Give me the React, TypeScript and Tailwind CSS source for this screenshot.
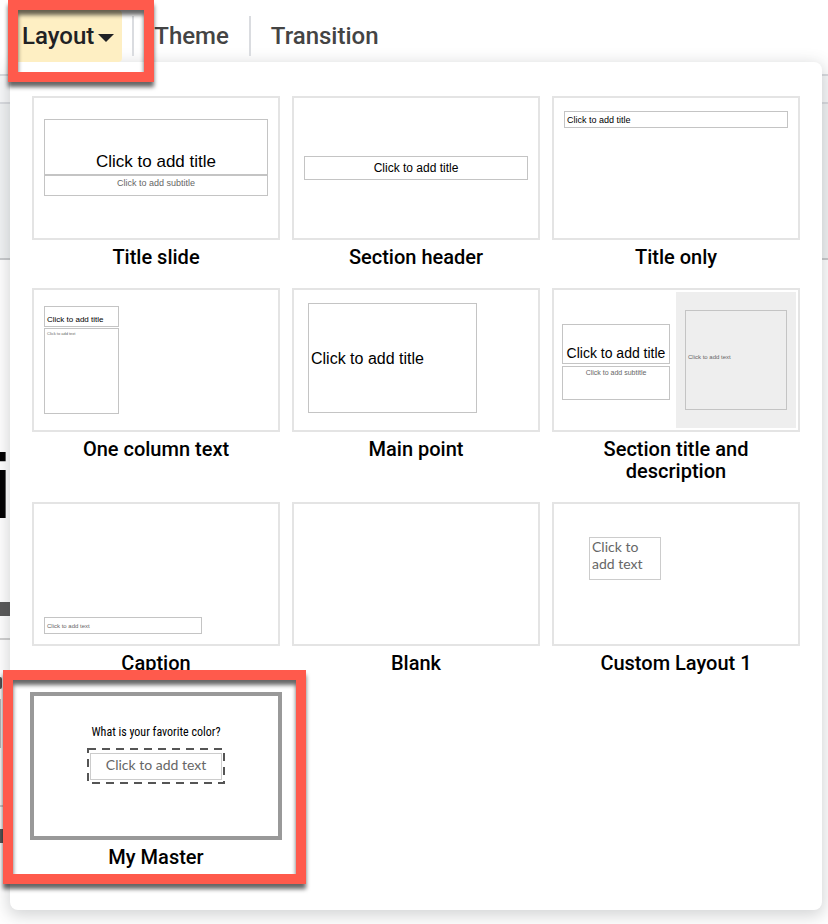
import type { ReactNode } from "react";
import clsx from "clsx";

const arial = "font-['Liberation_Sans',Arial,sans-serif]";

function Highlight({ className }: { className: string }) {
  return (
    <span
      aria-hidden="true"
      className={clsx(
        "pointer-events-none absolute z-30 border-10 border-[#ff5a4c] drop-shadow-[0_5px_2px_rgba(0,0,0,0.6)]",
        className,
      )}
    />
  );
}

function Placeholder({ className, children }: { className?: string; children: ReactNode }) {
  return (
    <span className={clsx("flex border border-[#c4c4c4] px-0.5 text-left whitespace-nowrap", arial, className)}>
      {children}
    </span>
  );
}

type Layout = { name: string; preview: ReactNode; selected?: boolean };

const layouts: Layout[] = [
  {
    name: "Title slide",
    preview: (
      <span className="flex flex-col px-[10px] pt-[21px]">
        <Placeholder className="h-14 items-end justify-center border-[#b4b4b4] pb-0.5 text-[17px] leading-5 text-black">
          Click to add title
        </Placeholder>
        <Placeholder className="h-[21px] items-start justify-center pt-px text-[9px] leading-3 text-[#666]">
          Click to add subtitle
        </Placeholder>
      </span>
    ),
  },
  {
    name: "Section header",
    preview: (
      <span className="flex h-full flex-col justify-center px-[10px]">
        <Placeholder className="h-6 items-center justify-center text-[12px] leading-4 text-black">
          Click to add title
        </Placeholder>
      </span>
    ),
  },
  {
    name: "Title only",
    preview: (
      <span className="flex flex-col px-[10px] pt-[13px]">
        <Placeholder className="h-[17px] items-center text-[9px] leading-3 text-black">Click to add title</Placeholder>
      </span>
    ),
  },
  {
    name: "One column text",
    preview: (
      <span className="flex w-[85px] flex-col gap-px pt-4 pl-[10px]">
        <Placeholder className="h-[21px] items-end border-[#b4b4b4] pb-px text-[8px] leading-[10px] text-black">
          Click to add title
        </Placeholder>
        <Placeholder className="h-[86px] items-start pt-0.5 text-[4px] leading-[6px] text-[#666]">
          Click to add text
        </Placeholder>
      </span>
    ),
  },
  {
    name: "Main point",
    preview: (
      <span className="flex pt-[13px] pl-[14px]">
        <Placeholder className="h-[110px] w-[169px] items-center pt-0.5 text-[16px] leading-5 text-black">
          Click to add title
        </Placeholder>
      </span>
    ),
  },
  {
    name: "Section title and description",
    preview: (
      <span className="grid h-full grid-cols-2 p-0.5">
        <span className="flex flex-col gap-0.5 px-1.5 pt-8">
          <Placeholder className="h-10 items-end justify-center border-[#b4b4b4] text-[14px] leading-5 text-black">
            Click to add title
          </Placeholder>
          <Placeholder className="h-[34px] items-start justify-center pt-0.5 text-[7px] leading-2 text-[#666]">
            Click to add subtitle
          </Placeholder>
        </span>
        <span className="flex flex-col bg-[#eee] px-[9px] py-[18px]">
          <Placeholder className="flex-1 items-center pb-1.5 text-[6px] leading-2 text-[#666]">
            Click to add text
          </Placeholder>
        </span>
      </span>
    ),
  },
  {
    name: "Caption",
    preview: (
      <span className="flex h-full items-end pb-[10px] pl-[10px]">
        <Placeholder className="h-[17px] w-[158px] items-center text-[6px] leading-2 text-[#666]">
          Click to add text
        </Placeholder>
      </span>
    ),
  },
  { name: "Blank", preview: null },
  {
    name: "Custom Layout 1",
    preview: (
      <span className="flex pt-[33px] pl-[35px]">
        <span className="h-[43px] w-[72px] border border-[#ccc] px-0.5 text-left font-['Lato',sans-serif] text-[14px] leading-[17px] text-[#666]">
          Click to
          <br />
          add text
        </span>
      </span>
    ),
  },
  {
    name: "My Master",
    selected: true,
    preview: (
      <span className="flex flex-col items-center gap-1.5 pt-[26px]">
        <span className="font-['Liberation_Sans_Narrow','Roboto_Condensed',Roboto,sans-serif] text-[12px] leading-5 whitespace-nowrap text-black">
          What is your favorite color?
        </span>
        <span className="relative flex h-9 w-[138px] items-center justify-center">
          <svg className="absolute inset-0" width="138" height="36" viewBox="0 0 138 36" fill="none" aria-hidden="true">
            <path d="M1 1H137V35H1Z" stroke="#555" strokeWidth="2" strokeDasharray="8 6" />
          </svg>
          <span className="flex h-[27px] w-[132px] items-center justify-center border border-[#ccc] pb-0.5 font-['Lato',sans-serif] text-[14px] leading-5 text-[#666]">
            Click to add text
          </span>
        </span>
      </span>
    ),
  },
];

function LayoutOption({ name, preview, selected }: Layout) {
  return (
    <li className="relative">
      <button type="button" aria-pressed={!!selected} className={clsx("flex w-full flex-col", selected ? "gap-2" : "gap-1.5")}>
        <span
          className={clsx(
            "block h-36 w-full overflow-hidden border-2 bg-white",
            selected ? "border-[#999] ring-2 ring-[#999]" : "border-[#e4e4e4]",
          )}
        >
          {preview}
        </span>
        <span className="w-full px-8 text-center text-[20px] leading-[22px] font-medium text-black">{name}</span>
      </button>
      {selected && <Highlight className="-top-6 -right-[26px] -bottom-4 -left-[29px]" />}
    </li>
  );
}

function Backdrop() {
  return (
    <div aria-hidden="true" className="absolute inset-0 flex flex-col overflow-hidden">
      <div className="h-[74px]" />
      <div className="h-[30px] border-y-2 border-[#dadce0] bg-[#f8f9fa]" />
      <div className="h-[154px] bg-[#f1f3f4]" />
      <div className="flex-1 border-t-2 border-[#c8cacc] bg-white">
        <div className="h-[342px] pt-[177px]">
          <div className={clsx("flex w-3 justify-end text-[90px] leading-[100px] font-bold text-black", arial)}>i</div>
        </div>
        <div className="h-[14px] w-3 bg-[#595959]" />
        <div className="mt-[22px] h-0.5 w-3 bg-[#d0d0d0]" />
        <div className="mt-[37px] h-3 w-0.5 rounded-r-full bg-[#555]" />
        <div className="mt-[10px] h-[49px] w-px bg-[#bbb]" />
        <div className="mt-[57px] h-0.5 w-3 bg-[#d0d0d0]" />
        <div className="mt-[22px] h-[14px] w-3 bg-[#595959]" />
      </div>
    </div>
  );
}

export default function App() {
  return (
    <div className="relative min-h-screen overflow-hidden bg-white pb-3 font-[Roboto,sans-serif]">
      <Backdrop />
      <header className="relative z-20 flex h-[62px] items-end pl-3 text-[24px] leading-7 font-medium text-[#444]">
        <div className="relative">
          <button
            type="button"
            aria-expanded="true"
            className="flex h-[52px] items-center gap-1 rounded bg-[#feefc3] pr-2 pl-[10px] text-[#202124]"
          >
            Layout
            <svg width="16" height="8" viewBox="0 0 16 8" className="mt-1" fill="currentColor" aria-hidden="true">
              <path d="M0 0H16L8 8Z" />
            </svg>
          </button>
          <Highlight className="-top-[10px] -right-8 -bottom-5 -left-1" />
        </div>
        <span className="mb-1.5 ml-[10px] h-10 w-0.5 bg-[#dadce0]" />
        <button type="button" className="h-[52px] px-5">
          Theme
        </button>
        <span className="mb-1.5 h-10 w-0.5 bg-[#dadce0]" />
        <button type="button" className="h-[52px] px-5">
          Transition
        </button>
      </header>
      <section
        aria-label="Layouts"
        className="relative z-10 mr-1.5 ml-[10px] rounded-lg bg-white px-[22px] pt-[34px] pb-[42px] shadow-[0_4px_16px_2px_rgba(60,64,67,0.22)]"
      >
        <ul className="grid grid-cols-3 gap-x-3 gap-y-5">
          {layouts.map((layout) => (
            <LayoutOption key={layout.name} {...layout} />
          ))}
        </ul>
      </section>
    </div>
  );
}
